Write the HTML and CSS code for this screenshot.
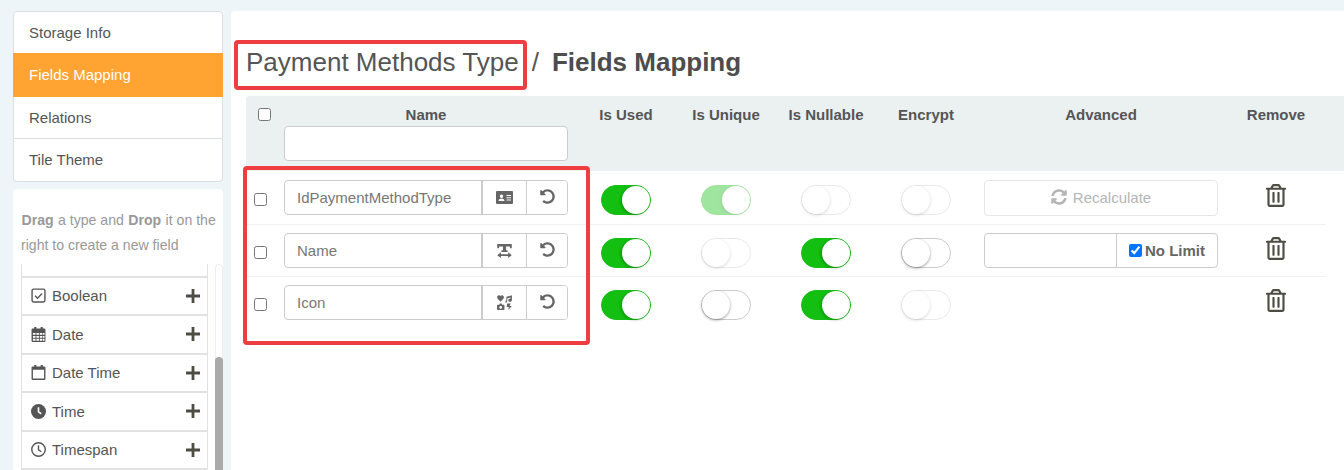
FILE: index.html
```html
<!DOCTYPE html>
<html lang="en">
  <head>
    <meta charset="UTF-8" />
    <meta name="viewport" content="width=device-width, initial-scale=1.0" />
    <title>Fields Mapping</title>
    <link rel="stylesheet" href="styles.css">
  </head>
  <body>
    <svg class="sprite" xmlns="http://www.w3.org/2000/svg">
      <symbol id="i-plus" viewBox="0 0 14 14"><path d="M5.6 0h2.8v5.6H14v2.8H8.400V14H5.600V8.400H0V5.600h5.600z" /></symbol>
      <symbol id="i-undo" viewBox="0 0 512 512"><path d="M255.545 8c-66.269.119-126.438 26.233-170.86 68.685L48.971 40.971C33.851 25.851 8 36.559 8 57.941V192c0 13.255 10.745 24 24 24h134.059c21.382 0 32.09-25.851 16.971-40.971l-41.75-41.75c30.864-28.899 70.801-44.907 113.23-45.273 92.398-.798 170.283 73.977 169.484 169.442C423.236 348.009 349.816 424 256 424c-41.127 0-79.997-14.678-110.63-41.556-4.743-4.161-11.906-3.908-16.368.553L89.34 422.659c-4.872 4.872-4.631 12.815.482 17.433C133.798 479.813 192.074 504 256 504c136.966 0 247.999-111.033 248-247.998C504.001 119.193 392.354 7.755 255.545 8z" /></symbol>
      <symbol id="i-trash" viewBox="0 0 448 512"><path d="M268 416h24a12 12 0 0 0 12-12V188a12 12 0 0 0-12-12h-24a12 12 0 0 0-12 12v216a12 12 0 0 0 12 12zM432 80h-82.41l-34-56.7A48 48 0 0 0 274.41 0H173.59a48 48 0 0 0-41.16 23.3L98.41 80H16A16 16 0 0 0 0 96v16a16 16 0 0 0 16 16h16v336a48 48 0 0 0 48 48h288a48 48 0 0 0 48-48V128h16a16 16 0 0 0 16-16V96a16 16 0 0 0-16-16zM171.84 50.91A6 6 0 0 1 177 48h94a6 6 0 0 1 5.15 2.91L293.61 80H154.39zM368 464H80V128h288zm-212-48h24a12 12 0 0 0 12-12V188a12 12 0 0 0-12-12h-24a12 12 0 0 0-12 12v216a12 12 0 0 0 12 12z" /></symbol>
    </svg>

    <div class="page">
      <aside class="sidebar">
        <nav class="menu">
          <a class="menu-item">Storage Info</a>
          <a class="menu-item active">Fields Mapping</a>
          <a class="menu-item">Relations</a>
          <a class="menu-item">Tile Theme</a>
        </nav>
        <div class="types">
          <p class="types-help"><b>Drag</b> a type and <b>Drop</b> it on the right to create a new field</p>
          <div class="types-scroll">
            <ul class="type-list">
              <li class="type-item type-cut"></li>
              <li class="type-item">
                <svg class="type-icon" viewBox="0 0 14 14"><rect x="1" y="1" width="12" height="12" rx="1.500" fill="none" stroke="currentColor" stroke-width="1.300" /><path d="M3.800 7.200l2.300 2.300 4.200-4.300" fill="none" stroke="currentColor" stroke-width="1.300" /></svg>
                <span>Boolean</span>
                <svg class="type-add"><use href="#i-plus" /></svg>
              </li>
              <li class="type-item">
                <svg class="type-icon" viewBox="0 0 14 14"><path fill-rule="evenodd" d="M3 0h2v1.500h4V0h2v1.500h1.500A1 1 0 0 1 13.500 2.500V13a1 1 0 0 1-1 1h-11a1 1 0 0 1-1-1V2.500a1 1 0 0 1 1-1H3zM1.800 5.500v1.800h2.400V5.500zm3.200 0v1.800h2.400V5.500zm3.200 0v1.800h2.400V5.500zm3 0v1.800h1.400V5.500zM1.800 8.300v1.800h2.400V8.300zm3.200 0v1.800h2.400V8.300zm3.200 0v1.800h2.400V8.300zm3 0v1.800h1.400V8.300zM1.800 11v1.800h2.400V11zm3.200 0v1.800h2.400V11zm3.200 0v1.800h2.400V11zm3 0v1.800h1.400V11z" /></svg>
                <span>Date</span>
                <svg class="type-add"><use href="#i-plus" /></svg>
              </li>
              <li class="type-item">
                <svg class="type-icon" viewBox="0 0 14 14"><path fill-rule="evenodd" d="M3 0h2v1.500h4V0h2v1.500h1.500a1 1 0 0 1 1 1V13a1 1 0 0 1-1 1h-11a1 1 0 0 1-1-1V2.500a1 1 0 0 1 1-1H3zM1.800 4.500v8.200h10.400V4.500z" /></svg>
                <span>Date Time</span>
                <svg class="type-add"><use href="#i-plus" /></svg>
              </li>
              <li class="type-item">
                <svg class="type-icon" viewBox="0 0 14 14"><circle cx="7" cy="7" r="7" /><path d="M7 3v4.300l2.600 1.800" fill="none" stroke="#fff" stroke-width="1.500" /></svg>
                <span>Time</span>
                <svg class="type-add"><use href="#i-plus" /></svg>
              </li>
              <li class="type-item">
                <svg class="type-icon" viewBox="0 0 14 14"><circle cx="7" cy="7" r="6.300" fill="none" stroke="currentColor" stroke-width="1.300" /><path d="M7 3v4.300l2.600 1.800" fill="none" stroke="currentColor" stroke-width="1.300" /></svg>
                <span>Timespan</span>
                <svg class="type-add"><use href="#i-plus" /></svg>
              </li>
              <li class="type-item"></li>
            </ul>
            <div class="scrollbar"><div class="scrollbar-thumb"></div></div>
          </div>
        </div>
      </aside>

      <main class="content">
        <h1 class="title"><span class="title-link">Payment Methods Type</span><span class="title-sep">/</span><strong>Fields Mapping</strong></h1>

        <div class="fields">
          <div class="row head">
            <div class="cell-check"><input type="checkbox" /></div>
            <div class="cell-name">
              <div class="head-label">Name</div>
              <input class="filter" type="text" />
            </div>
            <div class="head-label">Is Used</div>
            <div class="head-label">Is Unique</div>
            <div class="head-label">Is Nullable</div>
            <div class="head-label">Encrypt</div>
            <div class="head-label">Advanced</div>
            <div class="head-label">Remove</div>
          </div>

          <div class="row field first">
            <div class="cell-check"><input type="checkbox" /></div>
            <div class="cell-name">
              <div class="group">
                <div class="group-text">IdPaymentMethodType</div>
                <button class="group-btn type-btn">
                  <svg class="btn-icon card" viewBox="0 0 17 13"><path fill-rule="evenodd" d="M1 0h15a1 1 0 0 1 1 1v11a1 1 0 0 1-1 1H1a1 1 0 0 1-1-1V1a1 1 0 0 1 1-1zM5.500 3.500a1.700 1.700 0 1 0 0 3.400 1.700 1.700 0 0 0 0-3.400zM2.500 10h6c0-1.700-1.200-2.600-3-2.600s-3 .9-3 2.600zM10.500 4v1h4.500V4zm0 2.200v1h4.500v-1zm0 2.200v1h4.500v-1z" /></svg>
                </button>
                <button class="group-btn undo-btn"><svg class="btn-icon undo"><use href="#i-undo" /></svg></button>
              </div>
            </div>
            <div class="cell-toggle"><span class="toggle on"><i></i></span></div>
            <div class="cell-toggle"><span class="toggle on disabled"><i></i></span></div>
            <div class="cell-toggle"><span class="toggle disabled"><i></i></span></div>
            <div class="cell-toggle"><span class="toggle disabled"><i></i></span></div>
            <div class="cell-adv">
              <button class="recalc">
                <svg class="recalc-icon" viewBox="0 0 512 512"><path d="M370.72 133.28C339.458 104.008 298.888 87.962 255.848 88c-77.458.068-144.328 53.178-162.791 126.85-1.344 5.363-6.122 9.15-11.651 9.15H24.103c-7.498 0-13.194-6.807-11.807-14.176C33.933 94.924 134.813 8 256 8c66.448 0 126.791 26.136 171.315 68.685L463.03 40.97C478.149 25.851 504 36.559 504 57.941V192c0 13.255-10.745 24-24 24H345.941c-21.382 0-32.09-25.851-16.971-40.971l41.75-41.749zM32 296h134.059c21.382 0 32.09 25.851 16.971 40.971l-41.75 41.75c31.262 29.273 71.835 45.319 114.876 45.28 77.418-.07 144.315-53.144 162.787-126.849 1.344-5.363 6.122-9.15 11.651-9.15h57.304c7.498 0 13.194 6.807 11.807 14.176C478.067 417.076 377.187 504 256 504c-66.448 0-126.791-26.136-171.315-68.685L48.97 471.03C33.851 486.149 8 475.441 8 454.059V320c0-13.255 10.745-24 24-24z" /></svg>
                Recalculate
              </button>
            </div>
            <div class="cell-remove"><svg class="trash"><use href="#i-trash" /></svg></div>
          </div>

          <div class="row field">
            <div class="cell-check"><input type="checkbox" /></div>
            <div class="cell-name">
              <div class="group">
                <div class="group-text">Name</div>
                <button class="group-btn type-btn">
                  <svg class="btn-icon width" viewBox="0 0 14 13.500"><path d="M0 0h14v4h-1.500L12 2.500H8.500V6H10v1.800H4V6h1.500V2.500H2L1.500 4H0zM3.500 8v2h7V8L14 10.800 10.500 13.500v-2h-7v2L0 10.800z" /></svg>
                </button>
                <button class="group-btn undo-btn"><svg class="btn-icon undo"><use href="#i-undo" /></svg></button>
              </div>
            </div>
            <div class="cell-toggle"><span class="toggle on"><i></i></span></div>
            <div class="cell-toggle"><span class="toggle disabled"><i></i></span></div>
            <div class="cell-toggle"><span class="toggle on"><i></i></span></div>
            <div class="cell-toggle"><span class="toggle"><i></i></span></div>
            <div class="cell-adv">
              <div class="limit">
                <div class="limit-value"></div>
                <label class="limit-check"><input type="checkbox" checked />No Limit</label>
              </div>
            </div>
            <div class="cell-remove"><svg class="trash"><use href="#i-trash" /></svg></div>
          </div>

          <div class="row field last">
            <div class="cell-check"><input type="checkbox" /></div>
            <div class="cell-name">
              <div class="group">
                <div class="group-text">Icon</div>
                <button class="group-btn type-btn">
                  <svg class="btn-icon icons" viewBox="0 0 15 14"><path d="M3.300 6.200L.6 3.400C-.2 2.500 0 1 1.100.5 2 .1 2.800.4 3.300 1 3.800.4 4.600.1 5.500.5 6.600 1 6.800 2.500 6 3.400zM14 .2v4.700c0 .8-.8 1.400-1.800 1.400s-1.700-.6-1.700-1.400.8-1.400 1.700-1.400l.4.100V2.400l-3 .9v2.600c0 .8-.8 1.400-1.700 1.400L8 6.100c0-.5.400-.9.800-1.100V1.700zM.9 9h1.300l.4-1h1.800l.4 1h1.300c.5 0 .9.400.9.900v3.200c0 .5-.4.900-.9.900H.9c-.5 0-.9-.4-.9-.9V9.900c0-.5.400-.9.900-.9zm2.600 1.300a1.300 1.300 0 1 0 0 2.600 1.300 1.300 0 0 0 0-2.600zM9.500 8h3.300l-1 2.200h2.200L10.400 14l.8-2.800H9.100z" /></svg>
                </button>
                <button class="group-btn undo-btn"><svg class="btn-icon undo"><use href="#i-undo" /></svg></button>
              </div>
            </div>
            <div class="cell-toggle"><span class="toggle on"><i></i></span></div>
            <div class="cell-toggle"><span class="toggle"><i></i></span></div>
            <div class="cell-toggle"><span class="toggle on"><i></i></span></div>
            <div class="cell-toggle"><span class="toggle disabled"><i></i></span></div>
            <div class="cell-adv"></div>
            <div class="cell-remove"><svg class="trash"><use href="#i-trash" /></svg></div>
          </div>
        </div>
      </main>
    </div>

    <!-- red annotation boxes drawn over the screenshot -->
    <div class="mark mark-title"></div>
    <div class="mark mark-rows"></div>
  </body>
</html>
```

FILE: styles.css
```css
html,
body {
  height: 100%;
}

body {
  margin: 0;
  padding: 0;
  height: 470px;
  overflow: hidden;
  position: relative;
  background-color: #edf5f8;
  font-family: "Liberation Sans", Arial, sans-serif;
  font-size: 15px;
  color: #555;
}

.sprite {
  display: none;
}

.page {
  display: flex;
  gap: 8px;
  height: 459px;
  padding: 11px 0 0 13px;
}

/* left column */
.sidebar {
  width: 210px;
  flex: none;
  display: flex;
  flex-direction: column;
  gap: 7px;
}

.menu {
  display: flex;
  flex-direction: column;
  background-color: #fff;
  border: 1px solid #dcdfe0;
  border-radius: 4px;
}

.menu-item {
  height: 41px;
  line-height: 42px;
  padding-left: 15px;
}

.menu-item:nth-child(3) {
  border-bottom: 1px solid #dcdfe0;
}

.menu-item:nth-child(4) {
  height: 42px;
}

.menu-item.active {
  height: 44px;
  line-height: 44px;
  margin: 0 -1px;
  padding-left: 16px;
  background-color: #ffa333;
  color: #fff;
}

.types {
  flex: 1;
  min-height: 0;
  display: flex;
  flex-direction: column;
  background-color: #fff;
  border-radius: 4px 4px 0 0;
  overflow: hidden;
}

.types-help {
  margin: 0;
  padding: 19px 7px 6px 8px;
  font-size: 14.100px;
  line-height: 25px;
  color: #999;
}

.types-help b {
  margin: 0 0.5px;
}

.types-scroll {
  flex: 1;
  min-height: 0;
  display: flex;
  gap: 7px;
  padding-left: 8px;
  overflow: hidden;
}

.type-list {
  width: 187px;
  flex: none;
  margin: 0;
  padding: 0;
  list-style: none;
}

.type-item {
  display: flex;
  align-items: center;
  height: 36.500px;
  padding: 0 7px 0 9px;
  border-style: solid;
  border-width: 0 1px 2px 1px;
  border-color: #e2e2e2;
}

.type-cut {
  height: 11.500px;
}

.type-item span {
  margin-left: 6px;
}

.type-icon {
  width: 15px;
  height: 15px;
  fill: currentColor;
  flex: none;
}

.type-add {
  width: 14px;
  height: 14px;
  margin-left: auto;
  fill: #4d4d44;
}

.scrollbar {
  width: 8px;
  height: 206px;
  flex: none;
  box-sizing: border-box;
  display: flex;
  flex-direction: column;
  justify-content: flex-end;
  border: 1px solid #eee;
  border-bottom: 0;
  border-radius: 4px 4px 0 0;
}

.scrollbar-thumb {
  height: 113px;
  margin: 0 -1px;
  background-color: #aaa;
  border-radius: 4px 4px 0 0;
}

/* main panel */
.content {
  flex: 1;
  min-width: 0;
  background-color: #fff;
  border-radius: 4px 0 0 0;
  padding: 0 0 0 15px;
}

.title {
  display: flex;
  align-items: center;
  height: 67px;
  margin: 0;
  padding-top: 18px;
  font-size: 26px;
  font-weight: normal;
  color: #555;
}

.title-sep {
  margin: 0 13px;
}

.title strong {
  font-weight: bold;
  color: #4d4d4d;
}

.row {
  display: grid;
  grid-template-columns: 38px 292px 100px 100px 100px 100px 250px 100px;
  width: 1080px;
}

.head {
  height: 75px;
  width: 1098px;
  background-color: #ebf0f1;
  border-radius: 4px 0 0 0;
}

.head-label {
  padding-top: 11px;
  line-height: 16px;
  font-size: 15px;
  font-weight: bold;
  text-align: center;
  color: #555;
}

.head .cell-check input {
  margin: 12px 0 0 12px;
}

.cell-check input {
  display: block;
  width: 13px;
  height: 13px;
  margin: 13px 0 0 8px;
}

.cell-name {
  padding-right: 8px;
}

.filter {
  display: block;
  width: 100%;
  height: 35px;
  box-sizing: border-box;
  margin-top: 3px;
  border: 1px solid #ccc;
  border-radius: 4px;
  background-color: #fff;
}

.field {
  height: 52px;
  padding-top: 8px;
  box-sizing: border-box;
  border-bottom: 1px solid #f1f1f1;
}

.field.first {
  height: 54px;
  padding-top: 9px;
}

.field.last {
  border-bottom: 0;
}

.group {
  display: flex;
  height: 35px;
  box-sizing: border-box;
  border: 1px solid #ccc;
  border-radius: 4px;
}

.group-text {
  flex: 1;
  line-height: 34px;
  height: 33px;
  padding-left: 12px;
  border-right: 2px solid #ccc;
  color: #777;
}

.group-btn {
  padding: 0;
  border: 0;
  background-color: #fff;
  display: flex;
  align-items: center;
  justify-content: center;
  border-radius: 0 3px 3px 0;
}

.type-btn {
  width: 44px;
  border-right: 1px solid #ccc;
  border-radius: 0;
}

.undo-btn {
  width: 40px;
}

.btn-icon {
  fill: #666;
}

.card {
  width: 17px;
  height: 13px;
}

.width {
  width: 15px;
  height: 14px;
}

.icons {
  width: 16px;
  height: 15px;
}

.undo {
  width: 15px;
  height: 15px;
  margin-top: -2px;
}

.cell-toggle {
  display: flex;
  justify-content: center;
  padding-top: 5px;
}

/* switch, the knob sits at the end of the track */
.toggle {
  display: flex;
  width: 50px;
  height: 30px;
  box-sizing: border-box;
  border: 1px solid #ccc;
  border-radius: 15px;
  background-color: #fff;
}

.toggle i {
  display: block;
  width: 28px;
  height: 28px;
  border-radius: 50%;
  background-color: #fff;
  box-shadow: 0 1px 3px rgba(0, 0, 0, 0.4);
}

.toggle.on {
  justify-content: flex-end;
  border-color: #13bf11;
  background-color: #13bf11;
}

.toggle.on i {
  box-shadow: -1px 1px 3px rgba(0, 0, 0, 0.25);
}

.toggle.disabled {
  opacity: 0.4;
}

.cell-adv {
  padding: 0 8px;
}

.recalc {
  display: flex;
  align-items: center;
  justify-content: center;
  gap: 6px;
  width: 100%;
  height: 36px;
  padding: 0 0 2px;
  border: 1px solid #e6e6e6;
  border-radius: 4px;
  background-color: #fff;
  font: 15px "Liberation Sans", Arial, sans-serif;
  color: #b5b5b5;
}

.recalc-icon {
  width: 16px;
  height: 16px;
  fill: #b5b5b5;
}

.limit {
  display: flex;
  height: 35px;
  box-sizing: border-box;
  border: 1px solid #ccc;
  border-radius: 4px;
}

.limit-value {
  width: 131px;
  border-right: 1px solid #ccc;
}

.limit-check {
  display: flex;
  align-items: center;
  padding-left: 12px;
  font-size: 15px;
  font-weight: bold;
  color: #666;
}

.limit-check input {
  width: 13px;
  height: 13px;
  margin: 0 3px 0 0;
}

.cell-remove {
  display: flex;
  justify-content: center;
  padding-top: 4px;
}

.trash {
  width: 20px;
  height: 23px;
  fill: #4d4d44;
}

/* annotation overlays */
.mark {
  position: absolute;
  box-sizing: border-box;
  border: 4px solid #ef3e42;
  border-radius: 4px;
}

.mark-title {
  left: 234px;
  top: 40px;
  width: 293px;
  height: 50px;
}

.mark-rows {
  left: 243px;
  top: 166px;
  width: 347px;
  height: 179px;
}
```
